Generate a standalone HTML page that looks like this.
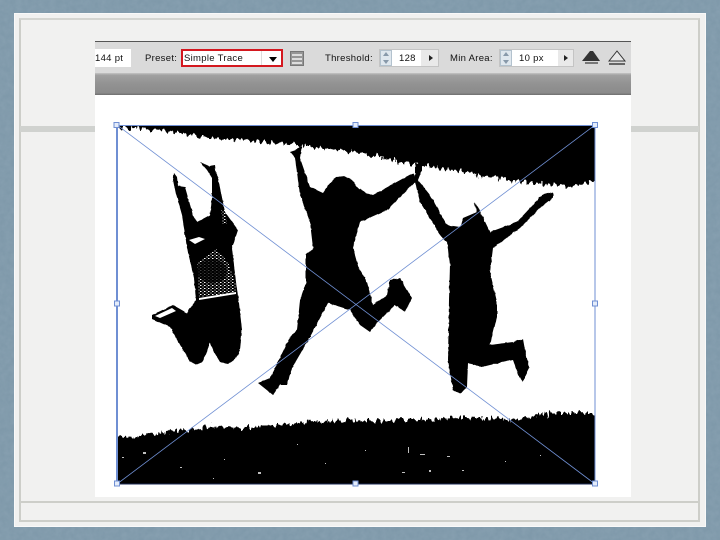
<!DOCTYPE html>
<html><head><meta charset="utf-8"><style>
html,body{margin:0;padding:0;background:#7b95a6}
body{width:720px;height:540px;overflow:hidden;position:relative;font-family:"Liberation Sans",sans-serif}
div{position:absolute;box-sizing:border-box}
.t{font-size:9.5px;color:#111;white-space:nowrap;line-height:12px;letter-spacing:.3px}
</style></head><body>
<svg style="position:absolute;left:0;top:0" width="720" height="540"><defs><filter id="bg" x="0" y="0" width="100%" height="100%"><feTurbulence type="fractalNoise" baseFrequency=".18" numOctaves="3" seed="4"/><feColorMatrix values="0 0 0 0 .35  0 0 0 0 .46  0 0 0 0 .55  .35 0 0 0 -.08"/></filter></defs><rect width="720" height="540" fill="#7f99aa"/><rect width="720" height="540" filter="url(#bg)"/></svg>
<div style="left:14px;top:13px;width:692px;height:514px;background:#f1f1f0;border:1px solid #f9f9f9"></div>
<div style="left:19px;top:18px;width:681px;height:504px;border:2px solid #cdcec9;border-top-color:#d4d5d1"></div>
<div style="left:20px;top:126px;width:679px;height:6px;background:#d0d2cf"></div>
<div style="left:20px;top:501px;width:679px;height:2px;background:#cdcec9"></div>
<div style="left:95px;top:41px;width:536px;height:456px;background:#fff"></div>
<div style="left:95px;top:41px;width:536px;height:33px;background:#dadada;border-top:1px solid #555"></div>
<div style="left:95px;top:73px;width:536px;height:22px;background:linear-gradient(#c4c4c4 0,#a0a0a0 10%,#929292 50%,#8b8b8b 90%,#6e6e6e 100%)"></div>
<div style="left:95px;top:49px;width:36px;height:18px;background:#fff"></div>
<div class="t" style="left:95px;top:53px">144 pt</div>
<div class="t" style="left:145px;top:53px">Preset:</div>
<div style="left:181px;top:49px;width:102px;height:18px;background:#fff;border:2px solid #d4181f"></div>
<div class="t" style="left:184px;top:53px">Simple Trace</div>
<div style="left:261px;top:51px;width:1px;height:14px;background:#ddd"></div>
<div style="left:269px;top:57px;width:0;height:0;border:4px solid transparent;border-top:5px solid #000;border-bottom:0"></div>
<div style="left:290px;top:51px;width:14px;height:15px;background:#969696;border:1px solid #777"></div>
<div style="left:292px;top:54px;width:10px;height:2px;background:#ddd"></div>
<div style="left:292px;top:58px;width:10px;height:2px;background:#ddd"></div>
<div style="left:292px;top:62px;width:10px;height:2px;background:#ddd"></div>
<div class="t" style="left:325px;top:53px">Threshold:</div>
<div style="left:379px;top:49px;width:60px;height:18px;background:#fff;border:1px solid #c4c4c4"></div>
<div style="left:380px;top:50px;width:12px;height:16px;background:#dfe7ee;border:1px solid #b3c2ce"></div>
<div style="left:383px;top:52px;width:0;height:0;border:3px solid transparent;border-bottom:4px solid #89a;border-top:0"></div>
<div style="left:383px;top:60px;width:0;height:0;border:3px solid transparent;border-top:4px solid #89a;border-bottom:0"></div>
<div class="t" style="left:399px;top:53px">128</div>
<div style="left:421px;top:50px;width:17px;height:16px;background:#e9e9e9"></div>
<div style="left:429px;top:55px;width:0;height:0;border:3px solid transparent;border-left:4px solid #222;border-right:0"></div>
<div class="t" style="left:450px;top:53px">Min Area:</div>
<div style="left:499px;top:49px;width:75px;height:18px;background:#fff;border:1px solid #c4c4c4"></div>
<div style="left:500px;top:50px;width:12px;height:16px;background:#dfe7ee;border:1px solid #b3c2ce"></div>
<div style="left:503px;top:52px;width:0;height:0;border:3px solid transparent;border-bottom:4px solid #89a;border-top:0"></div>
<div style="left:503px;top:60px;width:0;height:0;border:3px solid transparent;border-top:4px solid #89a;border-bottom:0"></div>
<div class="t" style="left:519px;top:53px">10 px</div>
<div style="left:558px;top:50px;width:15px;height:16px;background:#e9e9e9"></div>
<div style="left:564px;top:55px;width:0;height:0;border:3px solid transparent;border-left:4px solid #222;border-right:0"></div>
<svg style="position:absolute;left:0;top:0" width="720" height="540">
<defs>
<filter id="jag" x="-5%" y="-10%" width="110%" height="120%" color-interpolation-filters="sRGB"><feTurbulence type="fractalNoise" baseFrequency=".3 .12" numOctaves="2" seed="7"/><feDisplacementMap in="SourceGraphic" scale="12" xChannelSelector="R" yChannelSelector="G"/></filter>
<filter id="rough" x="-5%" y="-5%" width="110%" height="110%" color-interpolation-filters="sRGB"><feTurbulence type="fractalNoise" baseFrequency=".25" numOctaves="1" seed="3"/><feDisplacementMap in="SourceGraphic" scale="2" xChannelSelector="R" yChannelSelector="G"/></filter>
<pattern id="sp" width="4" height="3" patternUnits="userSpaceOnUse"><rect x="0" y="0" width="1.500" height="1" fill="#fff"/><rect x="2.500" y="1.500" width="1" height="1" fill="#fff"/></pattern>
<clipPath id="box"><rect x="117" y="125" width="478" height="359"/></clipPath>
</defs>
<g clip-path="url(#box)">
<path d="M600 413 L600 490 L112 490 L112 438 L118 437 L160 433 L210 427 L243 428 L277 425 L317 422 L360 420 L417 420 L467 417 L517 420 L550 413Z" fill="#000" filter="url(#jag)"/>
<rect x="117" y="445" width="478" height="39" fill="#000"/>
<g fill="#fff" opacity=".75"><rect x="143" y="452" width="3" height="2"/><rect x="122" y="457" width="2" height="1"/><rect x="180" y="467" width="2" height="1"/><rect x="224" y="459" width="1" height="1"/><rect x="258" y="472" width="3" height="2"/><rect x="213" y="478" width="1" height="1"/><rect x="408" y="447" width="1" height="6"/><rect x="420" y="454" width="5" height="1"/><rect x="447" y="456" width="3" height="1"/><rect x="402" y="472" width="3" height="1"/><rect x="429" y="470" width="2" height="2"/><rect x="462" y="470" width="2" height="1"/><rect x="505" y="461" width="1" height="1"/><rect x="540" y="455" width="1" height="1"/><rect x="297" y="444" width="1" height="1"/><rect x="325" y="463" width="1" height="1"/><rect x="365" y="450" width="1" height="1"/></g>
<path d="M119 120 L600 120 L600 180 L570 187 L533 183 L493 178 L457 170 L417 165 L383 158 L350 152 L317 147 L277 143 L243 140 L203 137 L160 130 L120 128Z" fill="#000" filter="url(#jag)"/>
<rect x="300" y="125" width="295" height="16" fill="#000"/>
<rect x="585" y="125" width="10" height="50" fill="#000"/>
</g>
<g fill="#000" filter="url(#rough)">
<path d="M173 180 L174 173 L177 177 L178 186 L185 187 L193 215 L197 222 L210 215 L212 198 L212 178 L207 170 L200 162 L209 166 L215 165 L216 174 L218 178 L225 212 L238 230 L232 248 L236 282 L239 303 L242 330 L240 350 L236 358 L228 364 L220 362 L214 352 L210 342 L207 352 L203 361 L197 365 L190 362 L183 350 L170 327 L152 319 L152 315 L173 305 L187 313 L196 300 L194 278 L187 248 L182 215 L175 190Z"/>
<path d="M290 152 L296 150 L302 145 L300 158 L310 187 L323 193 L330 183 L336 177 L345 176 L352 180 L358 188 L367 193 L373 195 L413 173 L417 180 L387 210 L360 222 L353 248 L358 266 L367 282 L373 305 L387 295 L390 280 L400 278 L412 298 L405 312 L395 305 L377 323 L370 332 L360 325 L350 310 L328 303 L310 337 L292 368 L287 385 L280 385 L273 395 L258 383 L270 378 L290 337 L297 330 L300 300 L306 282 L306 255 L313 248 L310 222 L300 195 L295 158Z"/>
<path d="M415 163 L422 165 L422 170 L418 180 L430 195 L447 225 L460 227 L463 218 L477 212 L474 202 L478 207 L490 232 L517 222 L542 195 L553 192 L553 198 L540 208 L520 228 L493 248 L490 272 L497 302 L497 317 L490 345 L513 342 L523 339 L525 350 L529 367 L523 382 L518 375 L513 360 L490 365 L482 367 L468 363 L467 387 L460 394 L453 390 L448 360 L449 300 L450 265 L447 242 L442 238 L420 202 L415 182Z"/>
</g>
<path d="M197 263 L216 249 L228 262 L236 285 L236 293 L199 297Z" fill="url(#sp)"/>
<ellipse cx="212" cy="271" rx="15" ry="12" fill="#000" opacity=".75"/>
<path d="M199 298 L236 292 L236 294 L199 300Z" fill="#fff"/>
<path d="M189 240 L199 237 L205 239 L195 244Z" fill="#fff"/>
<path d="M221 210 L226 209 L227 224 L222 224Z" fill="url(#sp)"/>
<path d="M155 316 L172 308 L176 311 L160 318Z" fill="#fff"/>
<g stroke="#6f8fd3" fill="none">
<rect x="117" y="125.500" width="478" height="358.500" stroke-width="1"/>
<path d="M117 125 V484" stroke-width="2"/>
<path d="M117 125 L595 484 M117 484 L595 125" stroke-width=".8"/>
</g>
<path d="M118 484 H595" stroke="#1b2a55" stroke-width="1"/>
<g fill="#e4ecfa" stroke="#6f8fd3" stroke-width="1">
<rect x="114" y="122.500" width="5" height="5"/><rect x="353" y="122.500" width="5" height="5"/><rect x="592.500" y="122.500" width="5" height="5"/>
<rect x="114.500" y="301" width="5" height="5"/><rect x="592.500" y="301" width="5" height="5"/>
<rect x="114.500" y="481" width="5" height="5"/><rect x="353" y="481" width="5" height="5"/><rect x="592.500" y="481" width="5" height="5"/>
</g>
<path d="M582 61 L590 51 L593 51 L600 61Z" fill="#333"/>
<path d="M585 63 H598" stroke="#777" stroke-width="2"/>
<path d="M609 61 L617 51 L625 61Z" fill="#e8e8e8" stroke="#333" stroke-width="1"/>
<path d="M609 64 H625" stroke="#666" stroke-width="2"/>
</svg>
</body></html>
